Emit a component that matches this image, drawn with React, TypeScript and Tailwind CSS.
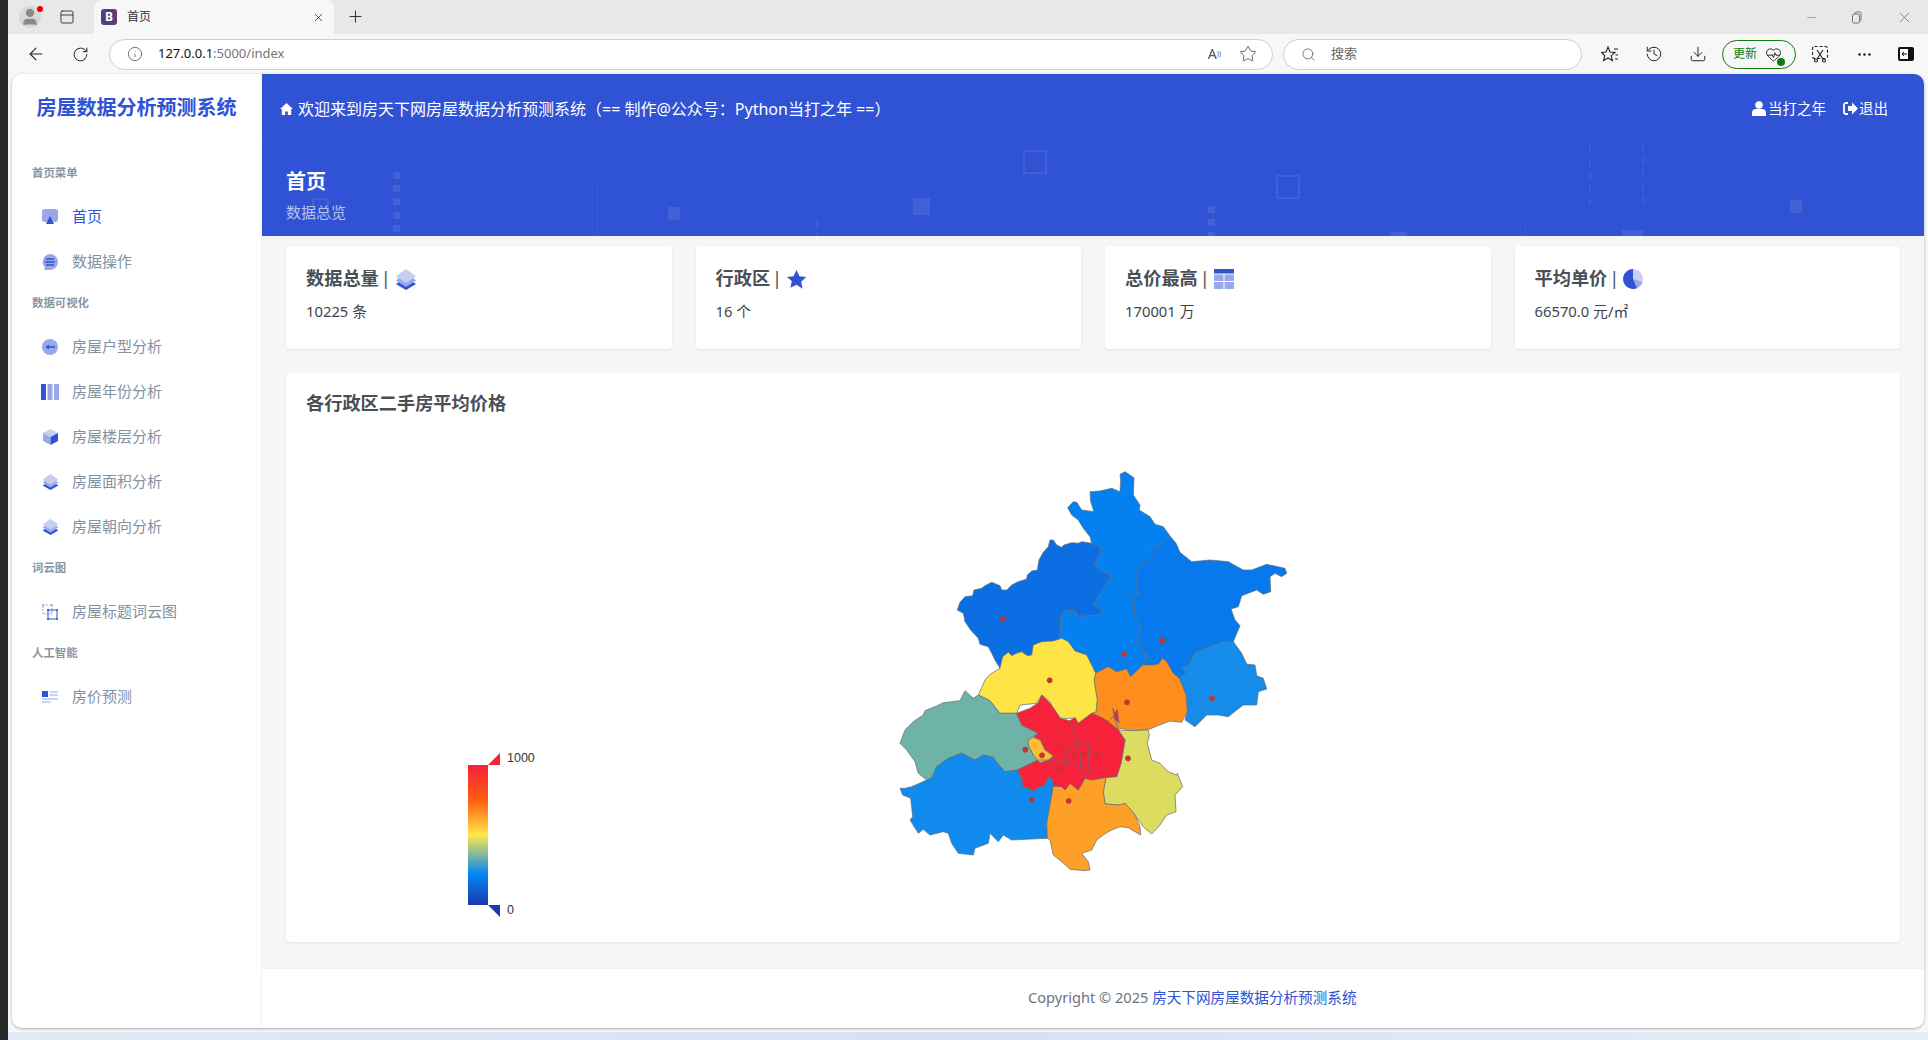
import { ArrowLeft, RotateCw, Info, Star, Search, Download, History, MoreHorizontal, X, Plus, Minus, HeartPulse, User, PanelTop } from "lucide-react";
import type { ReactNode } from "react";

const D = "#3052d4";
const L = "#98a8ea";
const P = "#c6cff3";

// nav and card icons
const LayersIcon = ({ size = 18 }: { size?: number }) => (
  <svg width={size} height={size} viewBox="0 0 24 24">
    <path d="M12 1 23 9 12 16 1 9Z" fill={P} />
    <path d="M4 11 1 13.5 12 20.5 23 13.5 20 11 12 16Z" fill={L} />
    <path d="M4 15.5 1 17.5 12 24 23 17.5 20 15.5 12 20.5Z" fill={D} />
  </svg>
);

const NavIcons: Record<string, ReactNode> = {
  home: (
    <svg width="18" height="18" viewBox="0 0 18 18">
      <rect x="1" y="1" width="16" height="13" rx="3" fill={L} />
      <path d="M9 8 13 16H5Z" fill={D} />
    </svg>
  ),
  chat: (
    <svg width="18" height="18" viewBox="0 0 18 18">
      <path d="M9 1a8 8 0 1 1 0 16H3l1-2.5A8 8 0 0 1 9 1Z" fill={L} />
      <path d="M5 6h8M4 9h10M5 12h8" stroke={D} strokeWidth="1.4" />
    </svg>
  ),
  arrow: (
    <svg width="16" height="16" viewBox="0 0 16 16">
      <circle cx="8" cy="8" r="8" fill={L} />
      <path d="M13 8H6" stroke={D} strokeWidth="1.5" />
      <path d="M3.5 8 7 5.5v5Z" fill={D} />
    </svg>
  ),
  cols: (
    <svg width="18" height="16" viewBox="0 0 18 16">
      <rect width="5" height="16" fill={D} />
      <rect x="6.5" width="5" height="16" fill={L} />
      <rect x="13" width="5" height="16" fill={L} />
    </svg>
  ),
  cube: (
    <svg width="15" height="16" viewBox="0 0 15 16">
      <path d="M7.5 0 15 4 7.5 8 0 4Z" fill={P} />
      <path d="M0 4 7.5 8V16L0 12Z" fill={L} />
      <path d="M15 4 7.5 8V16L15 12Z" fill={D} />
    </svg>
  ),
  layers: <LayersIcon size={17} />,
  cloud: (
    <svg width="16" height="16" viewBox="0 0 16 16" fill="none">
      <rect x="1" y="1" width="9" height="9" stroke={L} strokeDasharray="2 1" />
      <rect x="6" y="6" width="9" height="9" stroke={D} />
      <path d="M4.5 8h3M6 6.5v3" stroke={L} />
      <circle cx="6" cy="6" r="1" fill={D} />
      <circle cx="15" cy="6" r="1" fill={D} />
      <circle cx="6" cy="15" r="1" fill={D} />
      <circle cx="15" cy="15" r="1" fill={D} />
      <circle cx="1" cy="1" r="1" fill={L} />
      <circle cx="10" cy="1" r="1" fill={L} />
    </svg>
  ),
  news: (
    <svg width="16" height="12" viewBox="0 0 16 12">
      <rect width="6" height="6" fill={D} />
      <path d="M7.5 1h8.5M7.5 4h8.5M0 8h16M0 11h9" stroke={L} strokeWidth="1.2" />
    </svg>
  ),
};

const NAV = [
  { label: "首页菜单" },
  { text: "首页", icon: "home", active: true },
  { text: "数据操作", icon: "chat" },
  { label: "数据可视化" },
  { text: "房屋户型分析", icon: "arrow" },
  { text: "房屋年份分析", icon: "cols" },
  { text: "房屋楼层分析", icon: "cube" },
  { text: "房屋面积分析", icon: "layers" },
  { text: "房屋朝向分析", icon: "layers" },
  { label: "词云图" },
  { text: "房屋标题词云图", icon: "cloud" },
  { label: "人工智能" },
  { text: "房价预测", icon: "news" },
];

const CARDS: { title: string; value: string; icon: ReactNode }[] = [
  { title: "数据总量", value: "10225 条", icon: <LayersIcon size={22} /> },
  {
    title: "行政区",
    value: "16 个",
    icon: (
      <svg width="21" height="21" viewBox="0 0 24 24">
        <path d="M12 1l3.4 7.2 7.6 1-5.6 5.4 1.5 7.9L12 18l-6.9 3.5 1.5-7.9L1 9.2l7.6-1Z" fill={D} />
      </svg>
    ),
  },
  {
    title: "总价最高",
    value: "170001 万",
    icon: (
      <svg width="20" height="20" viewBox="0 0 20 20">
        <rect width="20" height="4.5" fill={D} />
        <path d="M0 5.5h9.5V12H0ZM10.5 5.5H20V12h-9.5ZM0 13h9.5v7H0ZM10.5 13H20v7h-9.5Z" fill={L} />
      </svg>
    ),
  },
  {
    title: "平均单价",
    value: "66570.0 元/㎡",
    icon: (
      <svg width="20" height="20" viewBox="0 0 20 20">
        <circle cx="10" cy="10" r="10" fill={P} />
        <path d="M10 10 19.5 13A10 10 0 0 1 14 19.2Z" fill={L} />
        <path d="M10 0V10L14 19.2A10 10 0 1 1 10 0Z" fill={D} />
      </svg>
    ),
  },
];

// map outlines were traced from four 3x crops, each with its own origin
const ORIGINS: Record<string, [number, number]> = {
  A: [950, 465],
  B: [1100, 465],
  C: [890, 680],
  D: [1020, 680],
};

function trace(...parts: [string, string][]) {
  return parts
    .flatMap(([crop, pts]) =>
      pts.split(" ").map((p) => {
        const [x, y] = p.split(",").map(Number);
        return `${(ORIGINS[crop][0] + x / 3).toFixed(1)},${(ORIGINS[crop][1] + y / 3).toFixed(1)}`;
      })
    )
    .join(" ");
}

const REGIONS = [
  { fill: "#0b6fe3", pts: trace(["A", "425,235 395,230 385,235 365,233 342,240 335,247 320,240 310,225 300,225 295,245 280,262 267,285 262,315 245,318 232,330 230,342 205,350 185,360 170,375 155,375 150,362 125,352 105,362 95,370 72,375 68,392 45,395 30,412 22,435 40,445 45,470 62,495 85,520 90,538 115,545 125,565 135,585 150,610 158,575 175,562 185,572 200,565 215,560 232,572 245,570 250,540 275,530 310,528 328,525 332,490 332,455 345,437 375,437 385,455 410,452 445,450 458,440 452,428 430,420 440,400 465,370 470,345 488,338 470,325 445,312 435,300 452,260 450,245"]) },
  { fill: "#0580f0", pts: trace(["A", "425,235 420,215 400,190 385,165 365,150 353,128 370,110 380,112 395,135 432,140 422,110 420,80 450,78 485,70 510,80 512,45 510,28 525,20 552,38 550,90 570,120 568,135 600,155 615,178 640,185 660,213"], ["B", "190,235 155,250 157,280 125,292 113,320 107,350 118,390 90,395 105,408 103,450 120,475 125,500 112,520 122,552 147,573 128,600 92,635 80,612 50,620 25,605 -5,620 -13,625"], ["A", "420,590 410,570 375,558 355,530 335,520 328,525 332,490 332,455 345,437 375,437 385,455 410,452 445,450 458,440 452,428 430,420 440,400 465,370 470,345 488,338 470,325 445,312 435,300 452,260 450,245"]) },
  { fill: "#0779ec", pts: trace(["B", "210,213 228,235 240,262 275,290 330,285 385,290 430,315 455,315 500,298 555,310 560,325 545,335 525,325 510,335 512,380 490,388 470,375 425,392 415,425 393,432 405,465 420,482 400,530 370,530 330,545 285,562 270,595 245,610 258,625 238,640 220,625 200,590 188,580 175,598 160,600 128,600 147,573 122,552 112,520 125,500 120,475 103,450 105,408 90,395 118,390 107,350 113,320 125,292 157,280 155,250 190,235"]) },
  { fill: "#158cea", pts: trace(["B", "400,530 425,565 440,597 465,600 470,632 490,640 500,672 475,680 470,720 430,720 410,735 385,755 355,750 320,750 285,785 255,765 262,740 258,690 238,640 258,625 245,610 270,595 285,562 330,545 370,530"]) },
  { fill: "#fe8f1f", pts: trace(["B", "128,600 160,600 175,598 188,580 200,590 220,625 238,640 258,690 262,740 245,772 210,768 178,780 150,792 100,797 60,790"], ["D", "295,150 265,125 215,100 228,95 232,60 222,0"], ["B", "-13,625 -5,620 25,605 50,620 80,612 92,635"]) },
  { fill: "#fee444", pts: trace(["A", "120,628 150,610 158,575 175,562 185,572 200,565 215,560 232,572 245,570 250,540 275,530 310,528 335,520 355,530 375,558 410,570 420,590 437,625"], ["D", "222,0 232,60 228,95 215,100 175,130 160,115 125,115 100,90 90,65 65,45 50,70 0,75"], ["C", "380,100 330,100 300,62 265,45 285,0"]) },
  { fill: "#6fb3a8", pts: trace(["C", "380,100 330,100 300,62 265,45 250,55 225,32 210,62 185,65 160,68 140,78 105,92 100,105 70,125 45,150 30,190 50,210 75,245 85,280 110,300 125,295 140,260 175,235 215,220 255,240 280,225 310,232 318,245 345,275 382,270 445,240 430,225 415,195 420,175 445,160 395,135"]) },
  { fill: "#108bed", pts: trace(["C", "382,270 345,275 318,245 310,232 280,225 255,240 215,220 175,235 140,260 125,295 110,300 65,320 45,325 30,325 38,345 62,355 68,410 60,420 85,460 100,448 120,465 160,455 175,460 185,490 205,520 250,525 255,505 295,490 300,460 325,485 340,465 365,480 472,475 470,430 480,375 490,318 488,300 475,290 465,315 450,320 425,335 420,325 400,322 395,295"]) },
  { fill: "#dcdd60", pts: trace(["D", "295,150 330,152 385,150 388,165 382,190 395,240 420,250 445,275 470,285 472,280 488,320 465,345 468,395 440,405 420,435 395,462 370,440 345,405 315,370 300,375 255,372 250,335 258,292 290,290 303,250 315,180"]) },
  { fill: "#fea027", pts: trace(["D", "100,318 125,320 135,330 150,310 175,330 195,295 215,300 258,292 250,335 255,372 300,375 315,370 345,405 360,440 362,465 345,455 325,443 300,440 270,452 250,465 230,480 215,510 185,520 205,545 210,570 195,572 150,568 125,545 100,525 90,480 82,475 80,430 90,375"]) },
  { fill: "#f6223a", pts: trace(["C", "380,100 420,85 445,68 455,45 480,70 495,90 510,115 540,122 555,112 565,130 605,100 640,115 655,125 685,150 705,180 693,250 680,290 648,292 605,300 585,295 565,330 540,310 525,330 515,320 490,318 488,300 475,290 465,315 450,320 425,335 420,325 400,322 395,295 382,270 445,240 475,240 490,228 465,210 450,180 430,172 445,160 395,135"]) },
  { fill: "#fdbc33", pts: trace(["C", "415,180 430,172 450,180 465,210 490,228 475,240 450,248 430,225 415,195"]) },
  { fill: "#fe8f1f", pts: trace(["D", "265,125 280,108 295,150"]) },
  { fill: "#f6223a", pts: trace(["D", "278,85 285,100 292,88 297,130 285,118"]) },
];

const INNER = [
  "175,130 155,145 170,182 178,185",
  "140,210 175,195 175,183 205,195 207,262 180,265 140,250 140,210",
  "178,190 182,262",
  "55,240 110,240 140,250",
  "207,262 217,270 190,290 195,295",
];

// ordered as [x, y, opacity], crop origin 880,450
const DOTS = [
  [369, 507, 1], [732, 612, 1], [847, 572, 1], [996, 745, 1], [741, 757, 1], [509, 691, 1], [744, 925, 1], [436, 899, 1],
  [486, 916, 1], [550, 885, 0.75], [582, 915, 0.75], [610, 913, 0.75], [649, 911, 0.75], [537, 955, 0.75], [455, 1049, 1], [566, 1053, 1],
];

function ChartCanvas() {
  return (
    <svg width="1614" height="520" viewBox="0 0 1614 520" className="block">
      <defs>
        <linearGradient id="legendBar" x1="0" y1="0" x2="0" y2="1">
          <stop offset="0" stopColor="#f6223a" />
          <stop offset="0.25" stopColor="#ff5c12" />
          <stop offset="0.5" stopColor="#ffe84a" />
          <stop offset="0.78" stopColor="#0286f5" />
          <stop offset="1" stopColor="#1c38ac" />
        </linearGradient>
      </defs>
      {/* legend */}
      <rect x="182" y="343" width="20" height="140" fill="url(#legendBar)" />
      <path d="M202 343 214 331V343Z" fill="#f6223a" />
      <path d="M202 483H214V495Z" fill="#1c38ac" />
      <text x="221" y="340" fontSize="12.5" fill="#333" fontFamily="Liberation Sans, sans-serif">1000</text>
      <text x="221" y="492" fontSize="12.5" fill="#333" fontFamily="Liberation Sans, sans-serif">0</text>
      {/* map, drawn in page coordinates */}
      <g transform="translate(-286 -422)">
        {REGIONS.map((r, i) => (
          <polygon key={i} points={r.pts} fill={r.fill} stroke="#5d6c78" strokeWidth="0.7" strokeLinejoin="round" />
        ))}
        {INNER.map((pts, i) => (
          <polyline key={i} points={trace(["D", pts])} fill="none" stroke="#5d6c78" strokeWidth="0.7" />
        ))}
        {DOTS.map(([x, y, o], i) => (
          <circle key={i} cx={880 + x / 3} cy={450 + y / 3} r="2.8" fill="#c23531" opacity={o} />
        ))}
      </g>
    </svg>
  );
}

function HeaderPattern() {
  return (
    <svg className="absolute inset-0" width="1662" height="162" viewBox="262 74 1662 162" fill="#fff">
      <g fillOpacity="0.09">
        {[172, 185, 198, 212, 225].map((y) => (
          <rect key={y} x="393" y={y} width="7" height="7" />
        ))}
        {[206, 219, 232].map((y) => (
          <rect key={y} x="1208" y={y} width="7" height="7" />
        ))}
        <rect x="668" y="207" width="12" height="13" />
        <rect x="913" y="198" width="17" height="17" />
        <rect x="1391" y="232" width="16" height="4" />
        <rect x="1622" y="230" width="21" height="6" />
        <rect x="1790" y="200" width="12" height="13" />
      </g>
      <g fillOpacity="0.05">
        <rect x="597" y="182" width="1" height="54" />
        <rect x="1525" y="217" width="1" height="19" />
      </g>
      <g fill="none" stroke="#fff" strokeOpacity="0.09">
        <rect x="1024" y="151" width="22" height="22" strokeWidth="2" />
        <rect x="1277" y="176" width="22" height="22" strokeWidth="2" />
        <rect x="313" y="199" width="15" height="15" strokeWidth="2" />
        <path d="M1590 146V207M1643 144V203M817 220V236" strokeDasharray="7 6" strokeWidth="1.5" />
      </g>
    </svg>
  );
}

function BrowserChrome() {
  return (
    <>
      <div className="flex h-[34px] items-end bg-[#e8e8e8]">
        <div className="relative ml-[11px] flex h-[34px] w-[22px] items-center">
          <div className="flex size-[22px] items-center justify-center overflow-hidden rounded-full bg-[#d8d8d4]">
            <User size={20} fill="#8b8b87" stroke="#8b8b87" />
          </div>
          <span className="absolute right-[-2px] top-[6px] size-[6px] rounded-full bg-[#e60000]" />
        </div>
        <PanelTop size={16} strokeWidth={1.4} className="mb-[9px] ml-[18px] text-[#333]" />
        <div className="ml-[19px] flex h-[34px] w-[240px] items-center rounded-t-[8px] bg-[#f7f7f7] pl-[7px] pr-[9px]">
          <span className="flex size-4 items-center justify-center rounded-[3px] bg-[#563d7c] text-[12px] font-bold leading-none text-white">B</span>
          <span className="ml-[10px] flex-1 text-[12px] text-[#333]">首页</span>
          <X size={13} strokeWidth={1.5} className="text-[#333]" />
        </div>
        <Plus size={19} strokeWidth={1.3} className="mb-[8px] ml-[12px] text-[#333]" />
        <div className="ml-auto flex h-[34px] items-center gap-[33px] pr-[15px] text-[#666]">
          <Minus size={13} strokeWidth={1} />
          <svg width="12" height="13" viewBox="0 0 12 13" fill="none" stroke="#666" strokeWidth="0.9">
            <rect x="1.5" y="3" width="7" height="9" rx="1.5" />
            <path d="M4 3V2.5A1.5 1.5 0 0 1 5.500 1h3A1.500 1.500 0 0 1 10 2.500V8.500A1.500 1.500 0 0 1 8.500 10" />
          </svg>
          <X size={17} strokeWidth={1} />
        </div>
      </div>
      <div className="flex h-10 items-center bg-[#f7f7f7] text-[#222]">
        <ArrowLeft size={20} strokeWidth={1.3} className="ml-[18px]" />
        <RotateCw size={17} strokeWidth={1.4} className="ml-[26px]" />
        <div className="ml-[20px] flex h-[31px] w-[1164px] items-center rounded-full border border-[#cfcfcf] bg-white pl-[17px] pr-[15px]">
          <Info size={16} strokeWidth={1.2} className="text-[#555]" />
          <span className="ml-[15px] flex-1 text-[13px] text-[#767676]"><span className="text-[#111]">127.0.0.1</span>:5000/index</span>
          <span className="text-[14px] leading-none text-[#555]">A<sup className="text-[7px]">))</sup></span>
          <Star size={18} strokeWidth={1.1} className="ml-[18px] text-[#444]" />
        </div>
        <div className="ml-[10px] flex h-[31px] w-[299px] items-center rounded-full border border-[#cfcfcf] bg-white pl-[17px]">
          <Search size={15} strokeWidth={1.2} className="text-[#555]" />
          <span className="ml-[15px] text-[13px] text-[#666]">搜索</span>
        </div>
        <svg width="18" height="19" viewBox="0 0 18 19" fill="none" stroke="#222" strokeWidth="1.1" className="ml-[19px]">
          <path d="M7 2 9 7l5 .4-3.800 3.200 1.200 5L7 13l-4.400 2.600 1.200-5L0.500 7.400 5 7Z" />
          <path d="M13 4h4M14.500 10H17M14 14h3" />
        </svg>
        <History size={18} strokeWidth={1.3} className="ml-[26px]" />
        <Download size={18} strokeWidth={1.3} className="ml-[26px]" />
        <div className="ml-[15px] flex h-[29px] w-[74px] items-center rounded-full border border-[#107c10] pl-[10px]">
          <span className="text-[12px] text-[#107c10]">更新</span>
          <span className="relative ml-[8px]">
            <HeartPulse size={17} strokeWidth={1.3} />
            <span className="absolute bottom-[-3px] right-[-3px] size-[8px] rounded-full bg-[#107c10]" />
          </span>
        </div>
        <svg width="18" height="18" viewBox="0 0 18 18" fill="none" stroke="#222" strokeWidth="1.1" className="ml-[15px]">
          <rect x="1.5" y="1.5" width="15" height="12" rx="2" strokeDasharray="3 2" />
          <path d="M6 5l6 9M12 5l-6 9" />
          <circle cx="5" cy="15.500" r="1.500" />
          <circle cx="13" cy="15.500" r="1.500" />
        </svg>
        <MoreHorizontal size={17} strokeWidth={1.8} className="ml-[27px]" />
        <svg width="16" height="14" viewBox="0 0 16 14" className="ml-[25px]">
          <rect width="16" height="14" rx="2" fill="#111" />
          <rect x="2" y="2" width="8" height="10" fill="#fff" />
          <path d="M9 7H4M6 5 4 7l2 2" stroke="#111" fill="none" />
        </svg>
      </div>
    </>
  );
}

function Sidebar() {
  return (
    <aside className="flex w-[250px] shrink-0 flex-col border-r border-[#eef2f7]">
      <div className="flex h-[69px] items-center justify-center border-b border-[#f9fafc] text-[20px] font-bold text-[#3052d4]">
        房屋数据分析预测系统
      </div>
      <nav className="pt-[11px]">
        {NAV.map((item) =>
          item.label ? (
            <div key={item.label} className="flex h-10 items-center pb-[2px] pl-5 text-[11.4px] font-bold text-[#8a96a3]">
              {item.label}
            </div>
          ) : (
            <div key={item.text} className={`flex h-[45px] items-center text-[15px] ${item.active ? "text-[#3052d4]" : "text-[#8391a2]"}`}>
              <span className="flex w-[60px] justify-center pl-[16px]">{NavIcons[item.icon as string]}</span>
              {item.text}
            </div>
          )
        )}
      </nav>
    </aside>
  );
}

export default function App() {
  return (
    <div className="flex h-[1040px] w-[1928px] overflow-hidden bg-[#f7f7f7] font-['Noto_Sans','Noto_Sans_CJK_SC',sans-serif]">
      <div className="h-full w-2 shrink-0 bg-[#282828]" />
      <div className="flex min-w-0 flex-1 flex-col">
        <BrowserChrome />
        <div className="flex-1 pl-1 pr-1">
          <div className="flex h-[954px] overflow-hidden rounded-[10px] bg-white shadow-[0_1px_3px_rgba(0,0,0,0.3)]">
            <Sidebar />
            <main className="flex min-w-0 flex-1 flex-col">
              <header className="relative h-[162px] bg-[#3052d4] text-white">
                <HeaderPattern />
                <div className="relative flex h-[69px] items-center pl-[18px] pr-[36px]">
                  <svg width="13" height="12" viewBox="0 0 13 12" fill="#fff">
                    <path d="M6.500 0 13 6h-1.800v6H7.800V8.500H5.200V12H1.800V6H0Z" />
                  </svg>
                  <span className="ml-[5px] text-[16px]">欢迎来到房天下网房屋数据分析预测系统（== 制作@公众号：Python当打之年 ==）</span>
                  <span className="ml-auto flex items-center text-[14.5px]">
                    <svg width="14" height="15" viewBox="0 0 14 15" fill="#fff" className="mr-[2px]">
                      <circle cx="7" cy="4" r="3.800" />
                      <path d="M0 15V12a4 4 0 0 1 4-4h6a4 4 0 0 1 4 4v3Z" />
                    </svg>
                    当打之年
                  </span>
                  <span className="ml-[17px] flex items-center text-[14.5px]">
                    <svg width="15" height="13" viewBox="0 0 15 13" fill="#fff" className="mr-[1px]">
                      <path d="M5 1H3a2 2 0 0 0-2 2v7a2 2 0 0 0 2 2h2" fill="none" stroke="#fff" strokeWidth="1.800" />
                      <path d="M9 .5 15 6.500 9 12.500V9H5V4h4Z" />
                    </svg>
                    退出
                  </span>
                </div>
                <div className="relative pl-[24px] pt-[24px]">
                  <h1 className="text-[20px] font-bold leading-[30px]">首页</h1>
                  <p className="mt-[4px] text-[15px] leading-[22px] text-[#b6c2f0]">数据总览</p>
                </div>
              </header>
              <section className="flex-1 bg-[#f4f6f8] px-6 pt-[10px]">
                <div className="grid grid-cols-4 gap-6">
                  {CARDS.map((c) => (
                    <div key={c.title} className="h-[103px] rounded-[4px] bg-white px-5 pt-[20px] shadow-[0_1px_2px_rgba(50,60,80,0.1)]">
                      <div className="flex h-[26px] items-center text-[18.2px] font-bold text-[#4a4f55]">
                        {c.title}
                        <span className="ml-[2px] font-normal">|</span>
                        <span className="ml-[4px]">{c.icon}</span>
                      </div>
                      <div className="mt-[9px] text-[14.8px] leading-[20px] text-[#3f444a]">{c.value}</div>
                    </div>
                  ))}
                </div>
                <div className="mt-6 h-[569px] rounded-[4px] bg-white shadow-[0_1px_2px_rgba(50,60,80,0.1)]">
                  <h2 className="h-[49px] pl-5 pt-[17px] text-[18.2px] font-bold leading-[26px] text-[#4a4f55]">各行政区二手房平均价格</h2>
                  <ChartCanvas />
                </div>
              </section>
              <footer className="flex h-[60px] items-center border-t border-[#eef2f7] pb-[2px] pl-[766px] text-[14.6px] text-[#6c757d]">
                Copyright © 2025&nbsp;<span className="text-[#3052d4]">房天下网房屋数据分析预测系统</span>
              </footer>
            </main>
          </div>
        </div>
        <div className="h-2 bg-gradient-to-r from-[#dfeaf4] via-[#d6e0f4] to-[#e4eef6]" />
      </div>
    </div>
  );
}
